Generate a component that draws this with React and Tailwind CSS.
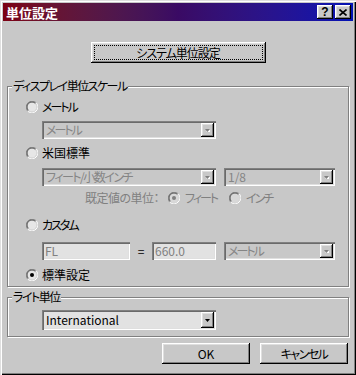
import React from "react";

const raised =
  "shadow-[inset_-1px_-1px_0_#000,inset_1px_1px_0_#fff,inset_-2px_-2px_0_#808080,inset_2px_2px_0_#dfdfdf]";
const sunken =
  "shadow-[inset_1px_1px_0_#808080,inset_2px_2px_0_#6a6a6a,inset_-1px_-1px_0_#fff,inset_-2px_-2px_0_#dfdfdf]";

function Radio({ checked, disabled }) {
  return (
    <svg width="12" height="12" viewBox="0 0 12 12" className="shrink-0">
      <circle cx="6" cy="6" r="4.5" fill={disabled ? "#d8d8d8" : "#e6e6e6"} />
      <path d="M10.24 1.76 A6 6 0 0 0 1.76 10.24" fill="none" stroke="#8a8a8a" strokeWidth="1" />
      <path d="M9.54 2.46 A5 5 0 0 0 2.46 9.54" fill="none" stroke="#5a5a5a" strokeWidth="1" />
      <path d="M10.24 1.76 A6 6 0 0 1 1.76 10.24" fill="none" stroke="#ffffff" strokeWidth="1" />
      <path d="M9.54 2.46 A5 5 0 0 1 2.46 9.54" fill="none" stroke="#dcdcdc" strokeWidth="1" />
      {checked && <circle cx="6" cy="6" r="2" fill={disabled ? "#808080" : "#000"} />}
    </svg>
  );
}

function Arrow({ disabled }) {
  return (
    <div className={`w-[13px] h-full bg-[#c8c8c8] flex items-center justify-center ${raised}`}>
      <svg width="7" height="5" viewBox="0 0 7 5">
        {disabled && <path d="M2 4 L6 4 L6 1 Z" fill="#fff" />}
        <path d="M1 1 L6 1 L3.5 4 Z" fill={disabled ? "#808080" : "#000"} />
      </svg>
    </div>
  );
}

function Combo({ text, w, h, disabled = true, bg = "bg-[#c8c8c8]" }) {
  return (
    <div className={`flex ${w} ${h} ${bg} pt-[2px] pl-[2px] pr-[2px] pb-[2px] ${sunken}`}>
      <div
        className={`flex-1 flex items-center pl-[2px] leading-none ${
          disabled ? "text-[#858585]" : "text-black"
        }`}
      >
        {text}
      </div>
      <Arrow disabled={disabled} />
    </div>
  );
}

function Input({ text, w }) {
  return (
    <div
      className={`flex items-center ${w} h-[18px] bg-[#e2e2e2] pl-[3px] text-[#808080] leading-none ${sunken}`}
    >
      {text}
    </div>
  );
}

function Group({ label, children, className }) {
  return (
    <div
      className={`relative mx-[4px] border border-[#808080] shadow-[inset_1px_1px_0_#fff,1px_1px_0_#fff] ${className}`}
    >
      <div className="absolute left-[4px] top-[-8px] px-[1px] bg-[#c8c8c8] leading-[14px] tracking-[-1.5px]">
        {label}
      </div>
      {children}
    </div>
  );
}

function Button({ children, w, focus }) {
  return (
    <div className={`relative ${w} h-[21px] bg-[#c8c8c8] flex items-center justify-center ${raised}`}>
      {focus && <div className="absolute inset-[3px] border border-dotted border-black" />}
      <span className="relative leading-none">{children}</span>
    </div>
  );
}

export default function App() {
  return (
    <div
      className={`w-[356px] h-[375px] bg-[#c8c8c8] p-[3px] flex flex-col text-[12px] text-black font-['Noto_Sans_CJK_JP',sans-serif] [font-feature-settings:'palt'] shadow-[inset_1px_1px_0_#dfdfdf,inset_2px_2px_0_#fff,inset_-1px_-1px_0_#000,inset_-2px_-2px_0_#808080]`}
    >
      {/* Title bar */}
      <div className="h-[18px] flex items-center bg-linear-to-r from-[#7c0012] via-[#3a0a64] to-[#0012b4]">
        <span className="pl-[3px] text-white font-bold text-[13px] leading-none">単位設定</span>
        <div className="ml-auto flex gap-[2px] pr-[2px]">
          <div className={`w-[16px] h-[14px] bg-[#c8c8c8] flex items-center justify-center ${raised}`}>
            <span className="font-['Liberation_Sans',sans-serif] font-bold text-[12px] leading-none">?</span>
          </div>
          <div className={`w-[16px] h-[14px] bg-[#c8c8c8] flex items-center justify-center ${raised}`}>
            <svg width="8" height="7" viewBox="0 0 8 7">
              <path d="M0.5 0.5 L7.5 6.5 M7.5 0.5 L0.5 6.5" stroke="#000" strokeWidth="1.6" />
            </svg>
          </div>
        </div>
      </div>

      {/* System button */}
      <div className="mt-[21px] flex justify-center">
        <Button w="w-[175px]" focus>
          <span className="tracking-[-1px]">システム単位設定</span>
        </Button>
      </div>

      {/* Display unit scale */}
      <Group label="ディスプレイ単位スケール" className="mt-[23px] pb-[4px]">
        <div className="mt-[13px] h-[14px] pl-[18px] flex items-center gap-[4px]">
          <Radio />
          <span className="leading-none tracking-[-2px]">メートル</span>
        </div>
        <div className="mt-[7px] ml-[34px]">
          <Combo text={<span className="tracking-[-2px]">メートル</span>} w="w-[174px]" h="h-[18px]" />
        </div>
        <div className="mt-[7px] h-[14px] pl-[18px] flex items-center gap-[4px]">
          <Radio />
          <span className="leading-none">米国標準</span>
        </div>
        <div className="mt-[8px] ml-[34px] flex gap-[8px]">
          <Combo text={<span className="tracking-[-1.5px]">フィート/小数インチ</span>} w="w-[174px]" h="h-[18px]" />
          <Combo text="1/8" w="w-[111px]" h="h-[18px]" />
        </div>
        <div className="mt-[5px] h-[14px] ml-[77px] flex items-center text-[#808080]">
          <span className="w-[83px] leading-none tracking-[-0.5px]">既定値の単位：</span>
          <Radio checked disabled />
          <span className="ml-[5px] w-[44px] leading-none tracking-[-2px]">フィート</span>
          <Radio disabled />
          <span className="ml-[5px] leading-none tracking-[-2px]">インチ</span>
        </div>
        <div className="mt-[13px] h-[14px] pl-[18px] flex items-center gap-[4px]">
          <Radio />
          <span className="leading-none tracking-[-2px]">カスタム</span>
        </div>
        <div className="mt-[10px] ml-[34px] flex items-center">
          <Input text="FL" w="w-[88px]" />
          <span className="w-[22px] text-center leading-none">=</span>
          <Input text="660.0" w="w-[64px]" />
          <div className="ml-[8px]">
            <Combo text={<span className="tracking-[-2px]">メートル</span>} w="w-[111px]" h="h-[18px]" />
          </div>
        </div>
        <div className="mt-[8px] h-[14px] pl-[18px] flex items-center gap-[4px]">
          <Radio checked />
          <span className="leading-none">標準設定</span>
        </div>
      </Group>

      {/* Light units */}
      <Group label="ライト単位" className="mt-[10px] pb-[6px]">
        <div className="mt-[12px] ml-[34px]">
          <Combo text="International" w="w-[174px]" h="h-[20px]" disabled={false} bg="bg-[#e2e2e2]" />
        </div>
      </Group>

      {/* Buttons */}
      <div className="mt-[6px] flex justify-end gap-[10px] pr-[5px]">
        <Button w="w-[88px]">OK</Button>
        <Button w="w-[88px]">
          <span className="tracking-[-1.5px]">キャンセル</span>
        </Button>
      </div>
    </div>
  );
}
